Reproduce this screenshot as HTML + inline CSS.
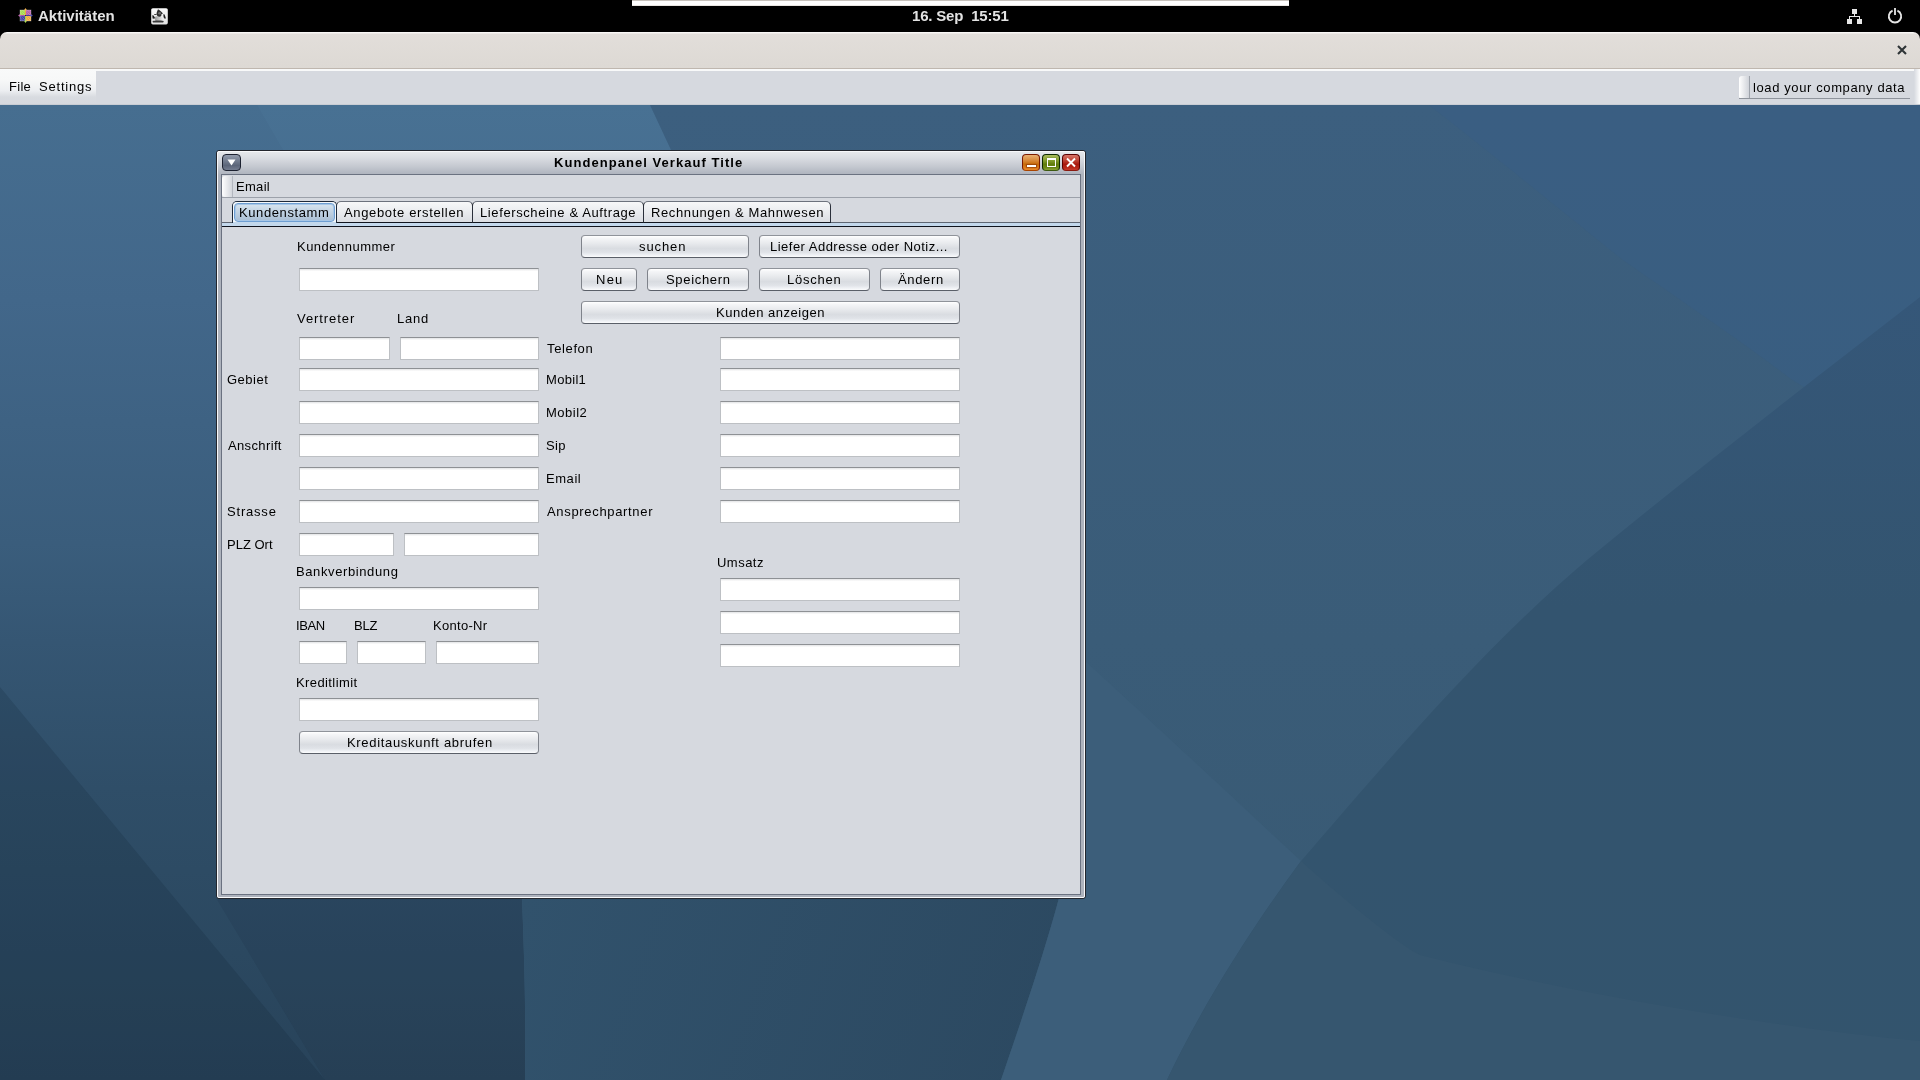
<!DOCTYPE html>
<html><head><meta charset="utf-8">
<style>
*{margin:0;padding:0;box-sizing:border-box}
html,body{width:1920px;height:1080px;overflow:hidden;background:#3b5d7c;font-family:"Liberation Sans",sans-serif}
.a{position:absolute}
.t{position:absolute;font-size:13px;color:#000;white-space:pre;line-height:15px;will-change:transform}
.tf{position:absolute;background:#fff;border:1px solid #bdc0c4;border-top-color:#8e9195}
.tf:after{content:"";position:absolute;left:0;right:0;top:0;height:2px;background:linear-gradient(#e2e3e5,#fdfdfd)}
.btn{position:absolute;border:1px solid #7f838b;border-bottom-color:#5a5f68;border-top-color:#8f939a;border-radius:4px;
 background:linear-gradient(#ffffff 0%,#f4f5f7 12%,#e8eaed 35%,#d9dce1 60%,#e0e3e8 78%,#eef0f4 90%,#fbfcfd 100%)}
.tb{position:absolute;top:154px;width:18px;height:17px;border-radius:4px}
</style></head><body>
<!-- desktop background -->
<svg class="a" style="left:0;top:0" width="1920" height="1080" viewBox="0 0 1920 1080">
<defs>
<linearGradient id="gL" gradientUnits="userSpaceOnUse" x1="0" y1="105" x2="0" y2="1080">
<stop offset="0" stop-color="#466e90"/><stop offset="0.2" stop-color="#42678a"/><stop offset="0.45" stop-color="#3a5d7c"/><stop offset="0.55" stop-color="#355673"/><stop offset="0.7" stop-color="#2f4e68"/><stop offset="0.87" stop-color="#2b4860"/><stop offset="1" stop-color="#28435a"/>
</linearGradient>
<linearGradient id="gLd" gradientUnits="userSpaceOnUse" x1="0" y1="684" x2="0" y2="1080">
<stop offset="0" stop-color="#2e4a62"/><stop offset="1" stop-color="#283f55"/>
</linearGradient>
<linearGradient id="gA" gradientUnits="userSpaceOnUse" x1="0" y1="105" x2="0" y2="1080">
<stop offset="0" stop-color="#3c5f7f"/><stop offset="0.55" stop-color="#3a5c78"/><stop offset="1" stop-color="#385972"/>
</linearGradient>
<radialGradient id="gTR" gradientUnits="userSpaceOnUse" cx="1920" cy="105" r="520">
<stop offset="0" stop-color="#3a6088" stop-opacity="0.55"/><stop offset="1" stop-color="#3a6088" stop-opacity="0"/>
</radialGradient>
<linearGradient id="gD" gradientUnits="userSpaceOnUse" x1="0" y1="297" x2="0" y2="1080">
<stop offset="0" stop-color="#355779"/><stop offset="0.4" stop-color="#33546f"/><stop offset="1" stop-color="#33546d"/>
</linearGradient>
<linearGradient id="gB2" gradientUnits="userSpaceOnUse" x1="525" y1="898" x2="1030" y2="1080">
<stop offset="0" stop-color="#31526c"/><stop offset="1" stop-color="#2c4961"/>
</linearGradient>
</defs>
<rect width="1920" height="1080" fill="url(#gA)"/>
<path d="M1429,105 C1500,160 1560,210 1623,260 C1680,300 1740,340 1791,379 C1840,410 1880,440 1920,470 L1920,105Z" fill="#385e86" fill-opacity="0.5"/>
<!-- top-left light petal -->
<path d="M0,105 L650,105 L671,150 L676,160 L0,160Z" fill="url(#gL)"/>
<path d="M257,105 L650,105 L671,150 L676,160 L289,160 Z" fill="#9fd0ff" fill-opacity="0.03"/>
<rect x="0" y="105" width="216" height="975" fill="url(#gL)"/>
<path d="M0,898 L522,898 C524,950 526,1010 525,1080 L0,1080Z" fill="url(#gL)"/>
<path d="M216,898 L522,898 C524,950 526,1010 525,1080 L325,1080Z" fill="#0a1520" fill-opacity="0.07"/>

<!-- bottom strip -->
<path d="M0,687 L325,1080 L0,1080Z" fill="#0a1520" fill-opacity="0.14"/>
<path d="M522,898 L1059,898 C1045,950 1025,1010 1001,1080 L525,1080 C526,1010 524,950 522,898Z" fill="url(#gB2)"/>
<!-- region B (below line a, left of curve 1) -->
<path d="M1085,661 C1150,720 1230,795 1301,861 C1350,905 1400,945 1420,955 C1600,1000 1800,1030 1920,1041 L1920,1080 L1001,1080 C1025,1010 1045,950 1059,898 L1085,898Z" fill="#3c5e7a"/>
<!-- dark petal right of curve 1 -->
<path d="M1920,297 C1800,390 1690,475 1587,560 C1480,650 1380,770 1301,861 C1250,930 1200,1010 1167,1080 L1920,1080Z" fill="url(#gD)"/>
<!-- bottom (below line a, right of curve 1) -->
<path d="M1301,861 C1350,905 1400,945 1420,955 C1600,1000 1800,1030 1920,1041 L1920,1080 L1167,1080 C1200,1010 1250,930 1301,861Z" fill="#36566f"/>
</svg>

<!-- top bar -->
<div class="a" style="left:0;top:0;width:1920px;height:44px;background:#000"></div>
<div class="a" style="left:632px;top:0;width:657px;height:6px;background:linear-gradient(#c7c2bc 0,#c7c2bc 1px,#fff 1px,#fff 5px,#e9e6e2 5px)"></div>
<svg class="a" style="left:14px;top:4px" width="24" height="24" viewBox="0 0 24 24">
<defs><pattern id="hp" width="2.5" height="2.5" patternUnits="userSpaceOnUse"><rect width="2.5" height="2.5" fill="none"/><path d="M0,0 L2.5,2.5" stroke="#fff" stroke-opacity="0.35" stroke-width="0.7"/></pattern></defs>
<rect x="6" y="6" width="5" height="5" fill="#a6d94a"/>
<rect x="12" y="6" width="5" height="5" fill="#b45aa8"/>
<rect x="6" y="12" width="5" height="5" fill="#3f3f9e"/>
<rect x="12" y="12" width="5" height="5" fill="#f0a93a"/>
<rect x="6" y="6" width="11" height="11" fill="url(#hp)"/>
<path d="M11.5,4 L13,6.2 L12,6.2 L12,11 L11,11 L11,6.2 L10,6.2Z" fill="#f0a93a"/>
<path d="M11.5,19 L13,16.8 L12,16.8 L12,12 L11,12 L11,16.8 L10,16.8Z" fill="#a6d94a"/>
<path d="M4,11.5 L6.2,10 L6.2,11 L11,11 L11,12 L6.2,12 L6.2,13Z" fill="#b45aa8"/>
<path d="M19,11.5 L16.8,10 L16.8,11 L12,11 L12,12 L16.8,12 L16.8,13Z" fill="#3f3f9e"/>
<rect x="6" y="6" width="11" height="11" fill="none" stroke="#fff" stroke-opacity="0.45" stroke-width="0.6"/>
</svg>
<svg class="a" style="left:151px;top:8px" width="17" height="17" viewBox="0 0 17 17">
<defs><linearGradient id="jg" x1="0" y1="0" x2="0" y2="1"><stop offset="0" stop-color="#fafafa"/><stop offset="1" stop-color="#e2e2e2"/></linearGradient>
<linearGradient id="jb" x1="0" y1="0" x2="1" y2="0"><stop offset="0" stop-color="#9a9a9a"/><stop offset="1" stop-color="#f0f0f0"/></linearGradient></defs>
<rect x="0.2" y="0.2" width="16.6" height="16.2" rx="1.6" fill="url(#jg)"/>
<path d="M4,9 C5,8 6,8 7,8.5 L10.5,8.5 C11.5,10 12,12 12,13.5 L4.5,13.5 C4,12 3.8,10.5 4,9Z" fill="url(#jb)"/>
<path d="M7,1.2 C8.5,2 10.5,3.8 12,5.6 L10.4,6.2 C10.6,7.5 10,8.6 8.6,8.8 L7.2,8.6 C6,7.8 5.4,6.5 5.6,5 C6,3.5 6.5,2.2 7,1.2Z" fill="#2e2e2e"/>
<ellipse cx="8.6" cy="5.3" rx="1.4" ry="1.2" fill="#6a6a6a"/>
<path d="M1.2,7.2 L2.6,7.6 L4,9.8 L3.4,10.8 L1.6,10.4Z" fill="#1e1e1e"/>
<rect x="3.2" y="6.1" width="2.4" height="0.9" fill="#333"/>
<path d="M12.3,6.3 L13.6,6.6 L14.8,10 L14,10.9 L12.6,9.2Z" fill="#1e1e1e"/>
<path d="M1.5,13 C4,12.4 9,12.3 12.8,13 L12.2,14.6 L2,14.6Z" fill="#3a3a3a"/>
</svg>
<svg class="a" style="left:1845px;top:7px" width="20" height="20" viewBox="0 0 20 20">
<g fill="#e6e6e6">
<rect x="7" y="2" width="5" height="5"/><rect x="2" y="12" width="5" height="5"/><rect x="12" y="12" width="5" height="5"/>
<rect x="9" y="7" width="1" height="2.5"/><rect x="4" y="9" width="11" height="1"/><rect x="4" y="9" width="1" height="3"/><rect x="14" y="9" width="1" height="3"/>
</g>
</svg>
<svg class="a" style="left:1885px;top:6px" width="20" height="20" viewBox="0 0 20 20">
<path d="M7.6,4.6 A6.2,6.2 0 1 0 12.4,4.6" fill="none" stroke="#e6e6e6" stroke-width="1.8"/>
<rect x="9.1" y="2" width="1.8" height="7" fill="#e6e6e6"/>
</svg>

<!-- gnome header -->
<div class="a" style="left:0;top:32px;width:1920px;height:37px;background:linear-gradient(#fbfaf9 0,#f6f4f2 1px,#e2deda 2px,#ddd9d4);border-radius:7px 7px 0 0;border-bottom:1px solid #bfb7af"></div>
<svg class="a" style="left:1896px;top:44px" width="12" height="12" viewBox="0 0 12 12">
<path d="M2,2 L10,10 M10,2 L2,10" stroke="#2e3436" stroke-width="2.1" stroke-linecap="butt"/>
</svg>

<!-- java menubar -->
<div class="a" style="left:0;top:69px;width:1920px;height:36px;background:linear-gradient(#f8f9f9 0,#f8f9f9 2px,#d6d9df 2px,#d6d9df 35px,#c9cdd4 35px)"></div>
<div class="a" style="left:1914px;top:69px;width:6px;height:35px;background:linear-gradient(90deg,#d6d9df,#fdfdfd)"></div>
<div class="a" style="left:0;top:69px;width:96px;height:35px;background:linear-gradient(#f9fafa 0%,#f7f8f8 30%,#eceef1 62%,#d8dbe0 80%,#d6d9df 100%)"></div>
<div class="a" style="left:1739px;top:76px;width:11px;height:23px;border-radius:3px 0 0 3px;background:linear-gradient(90deg,#ffffff,#d0d3d9);border-right:1px solid #9da2aa"></div>
<div class="a" style="left:1739px;top:98px;width:171px;height:1px;background:#8f949c"></div>

<!-- internal frame -->
<div class="a" style="left:216px;top:150px;width:870px;height:749px;border:1px solid #23262d;border-radius:3px;background:linear-gradient(#e8eaed 0px,#dcdfe4 6px,#c3c7cf 16px,#b2b7c1 22px,#aeb3bd 24px,#aeb3bd)"></div>
<div class="a" style="left:217px;top:151px;width:868px;height:747px;border:1px solid #f7f8fa;border-radius:2px"></div>
<div class="a" style="left:221px;top:174px;width:860px;height:721px;border:1px solid #6b7281;background:#d6d9df"></div>

<!-- frame menu button -->
<div class="a" style="left:222px;top:154px;width:19px;height:17px;border:1px solid #1c2130;border-radius:4px;background:linear-gradient(#939cad,#6a7487 50%,#5b6579 70%,#737c8f)"></div>
<svg class="a" style="left:226px;top:158px" width="11" height="9" viewBox="0 0 11 9"><path d="M1.5,1.5 L9.5,1.5 L5.5,7.5Z" fill="#fff"/></svg>

<!-- title buttons -->
<div class="tb" style="left:1022px;border:1px solid #7a1a00;border-bottom-color:#a84400;background:linear-gradient(#eab072 0%,#d98b3c 35%,#c86a08 62%,#dd7d1c 85%,#e98a2a 100%)"></div>
<div class="a" style="left:1027px;top:165px;width:9px;height:2px;background:#fff;box-shadow:0 0 1px 1px rgba(120,40,0,.55)"></div>
<div class="tb" style="left:1042px;border:1px solid #0f2a00;border-bottom-color:#3d5a10;background:linear-gradient(#a9bc5c 0%,#86a030 35%,#5f7c0c 62%,#6f8c18 85%,#8aa238 100%)"></div>
<div class="a" style="left:1047px;top:158px;width:9px;height:9px;border:1px solid #fff;border-top-width:2px;box-shadow:0 0 1px rgba(0,40,0,.5)"></div>
<div class="tb" style="left:1062px;border:1px solid #5a0000;border-bottom-color:#8a1a10;background:linear-gradient(#d77468 0%,#c04436 35%,#a8180e 62%,#b8281a 85%,#c83a2c 100%)"></div>
<svg class="a" style="left:1062px;top:154px" width="18" height="17" viewBox="0 0 18 17"><path d="M5,4.5 L13,12.5 M13,4.5 L5,12.5" stroke="#fff" stroke-width="1.9"/></svg>


<!-- frame menubar (Email) -->
<div class="a" style="left:222px;top:175px;width:858px;height:23px;background:#d6d9df;border-bottom:1px solid #9ca1aa"></div>
<div class="a" style="left:222px;top:176px;width:11px;height:21px;border-radius:3px 0 0 3px;background:linear-gradient(90deg,#ffffff,#d3d6dc);border-right:1px solid #b3b7bf"></div>

<!-- tabs -->
<div class="a" style="left:222px;top:222px;width:858px;height:5px;background:linear-gradient(#5f6672 0,#5f6672 1px,#c3d8ec 1px,#c3d8ec 4px,#10141d 4px)"></div>
<div class="a" style="left:336px;top:201px;width:137px;height:22px;border:1px solid #2a2f3a;border-top-color:#6c727d;border-radius:5px 5px 0 0;background:linear-gradient(#f7f8f9 0%,#eceef1 40%,#dadde2 100%);border-bottom-color:#10141d"></div>
<div class="a" style="left:472px;top:201px;width:172px;height:22px;border:1px solid #2a2f3a;border-top-color:#6c727d;border-radius:5px 5px 0 0;background:linear-gradient(#f7f8f9 0%,#eceef1 40%,#dadde2 100%);border-bottom-color:#10141d"></div>
<div class="a" style="left:643px;top:201px;width:188px;height:22px;border:1px solid #2a2f3a;border-top-color:#6c727d;border-radius:5px 5px 0 0;background:linear-gradient(#f7f8f9 0%,#eceef1 40%,#dadde2 100%);border-bottom-color:#10141d"></div>
<!-- selected tab -->
<div class="a" style="left:232px;top:201px;width:105px;height:22px;border:1px solid #1e2a3a;border-bottom:none;border-radius:5px 5px 0 0;background:#c3d8ec"></div>
<div class="a" style="left:233px;top:202px;width:103px;height:21px;border-radius:4px 4px 0 0;background:#f4f8fb"></div>
<div class="a" style="left:234px;top:203px;width:101px;height:19px;border:1px solid #6e9fd3;border-radius:4px;box-shadow:inset 0 0 0 1px #a8c7e6;background:linear-gradient(#d8e5f0 0%,#c4d5e5 40%,#a9bed3 100%)"></div>
<div class="a" style="left:233px;top:222px;width:103px;height:1px;background:#c3d8ec"></div>

<div class="tf" style="left:299px;top:268px;width:240px;height:23px"></div>
<div class="tf" style="left:299px;top:337px;width:91px;height:23px"></div>
<div class="tf" style="left:400px;top:337px;width:139px;height:23px"></div>
<div class="tf" style="left:299px;top:368px;width:240px;height:23px"></div>
<div class="tf" style="left:299px;top:401px;width:240px;height:23px"></div>
<div class="tf" style="left:299px;top:434px;width:240px;height:23px"></div>
<div class="tf" style="left:299px;top:467px;width:240px;height:23px"></div>
<div class="tf" style="left:299px;top:500px;width:240px;height:23px"></div>
<div class="tf" style="left:299px;top:533px;width:95px;height:23px"></div>
<div class="tf" style="left:404px;top:533px;width:135px;height:23px"></div>
<div class="tf" style="left:299px;top:587px;width:240px;height:23px"></div>
<div class="tf" style="left:299px;top:641px;width:48px;height:23px"></div>
<div class="tf" style="left:357px;top:641px;width:69px;height:23px"></div>
<div class="tf" style="left:436px;top:641px;width:103px;height:23px"></div>
<div class="tf" style="left:299px;top:698px;width:240px;height:23px"></div>
<div class="tf" style="left:720px;top:337px;width:240px;height:23px"></div>
<div class="tf" style="left:720px;top:368px;width:240px;height:23px"></div>
<div class="tf" style="left:720px;top:401px;width:240px;height:23px"></div>
<div class="tf" style="left:720px;top:434px;width:240px;height:23px"></div>
<div class="tf" style="left:720px;top:467px;width:240px;height:23px"></div>
<div class="tf" style="left:720px;top:500px;width:240px;height:23px"></div>
<div class="tf" style="left:720px;top:578px;width:240px;height:23px"></div>
<div class="tf" style="left:720px;top:611px;width:240px;height:23px"></div>
<div class="tf" style="left:720px;top:644px;width:240px;height:23px"></div>
<div class="btn" style="left:581px;top:235px;width:168px;height:23px"></div>
<div class="btn" style="left:759px;top:235px;width:201px;height:23px"></div>
<div class="btn" style="left:581px;top:268px;width:56px;height:23px"></div>
<div class="btn" style="left:647px;top:268px;width:102px;height:23px"></div>
<div class="btn" style="left:759px;top:268px;width:111px;height:23px"></div>
<div class="btn" style="left:880px;top:268px;width:80px;height:23px"></div>
<div class="btn" style="left:581px;top:301px;width:379px;height:23px"></div>
<div class="btn" style="left:299px;top:731px;width:240px;height:23px"></div>
<div class="t" id="t0" style="left:297.00px;top:239.00px;letter-spacing:0.482px;">Kundennummer</div>
<div class="t" id="t1" style="left:297.00px;top:311.00px;letter-spacing:0.925px;">Vertreter</div>
<div class="t" id="t2" style="left:397.00px;top:311.00px;letter-spacing:0.800px;">Land</div>
<div class="t" id="t3" style="left:547.00px;top:341.00px;letter-spacing:0.633px;">Telefon</div>
<div class="t" id="t4" style="left:227.00px;top:372.00px;letter-spacing:0.500px;">Gebiet</div>
<div class="t" id="t5" style="left:546.00px;top:372.00px;letter-spacing:0.300px;">Mobil1</div>
<div class="t" id="t6" style="left:546.00px;top:405.00px;letter-spacing:0.500px;">Mobil2</div>
<div class="t" id="t7" style="left:228.00px;top:438.00px;letter-spacing:0.362px;">Anschrift</div>
<div class="t" id="t8" style="left:546.00px;top:438.00px;letter-spacing:0.300px;">Sip</div>
<div class="t" id="t9" style="left:546.00px;top:471.00px;letter-spacing:0.550px;">Email</div>
<div class="t" id="t10" style="left:227.00px;top:504.00px;letter-spacing:0.800px;">Strasse</div>
<div class="t" id="t11" style="left:547.00px;top:504.00px;letter-spacing:0.671px;">Ansprechpartner</div>
<div class="t" id="t12" style="left:227.00px;top:537.00px;letter-spacing:0.000px;">PLZ Ort</div>
<div class="t" id="t13" style="left:296.00px;top:564.00px;letter-spacing:0.608px;">Bankverbindung</div>
<div class="t" id="t14" style="left:717.00px;top:555.00px;letter-spacing:0.480px;">Umsatz</div>
<div class="t" id="t15" style="left:296.00px;top:618.00px;letter-spacing:-0.367px;">IBAN</div>
<div class="t" id="t16" style="left:354.00px;top:618.00px;letter-spacing:-0.200px;">BLZ</div>
<div class="t" id="t17" style="left:433.00px;top:618.00px;letter-spacing:0.300px;">Konto-Nr</div>
<div class="t" id="t18" style="left:296.00px;top:675.00px;letter-spacing:0.400px;">Kreditlimit</div>
<div class="t" id="t19" style="left:9.00px;top:79.00px;letter-spacing:0.300px;">File</div>
<div class="t" id="t20" style="left:39.00px;top:79.00px;letter-spacing:0.800px;">Settings</div>
<div class="t" id="t21" style="left:1753.00px;top:80.00px;letter-spacing:0.610px;">load your company data</div>
<div class="t" id="t22" style="left:236.00px;top:179.00px;letter-spacing:0.300px;">Email</div>
<div class="t" id="t23" style="left:239.00px;top:205.00px;letter-spacing:0.600px;">Kundenstamm</div>
<div class="t" id="t24" style="left:344.00px;top:205.00px;letter-spacing:0.653px;">Angebote erstellen</div>
<div class="t" id="t25" style="left:480.00px;top:205.00px;letter-spacing:0.604px;">Lieferscheine & Auftrage</div>
<div class="t" id="t26" style="left:651.00px;top:205.00px;letter-spacing:0.610px;">Rechnungen & Mahnwesen</div>
<div class="t" id="t27" style="left:639.00px;top:239.00px;letter-spacing:0.900px;">suchen</div>
<div class="t" id="t28" style="left:770.00px;top:239.00px;letter-spacing:0.479px;">Liefer Addresse oder Notiz...</div>
<div class="t" id="t29" style="left:596.00px;top:272.00px;letter-spacing:1.250px;">Neu</div>
<div class="t" id="t30" style="left:666.00px;top:272.00px;letter-spacing:0.675px;">Speichern</div>
<div class="t" id="t31" style="left:787.00px;top:272.00px;letter-spacing:0.783px;">Löschen</div>
<div class="t" id="t32" style="left:898.00px;top:272.00px;letter-spacing:0.660px;">Ändern</div>
<div class="t" id="t33" style="left:716.00px;top:305.00px;letter-spacing:0.514px;">Kunden anzeigen</div>
<div class="t" id="t34" style="left:347.00px;top:735.00px;letter-spacing:0.681px;">Kreditauskunft abrufen</div>
<div class="t" id="t35" style="left:554.00px;top:155.00px;letter-spacing:1.050px;font-weight:bold;">Kundenpanel Verkauf Title</div>
<div class="t" id="t36" style="left:38.00px;top:7.30px;letter-spacing:-0.000px;font-weight:bold;font-size:15px;line-height:17px;color:#e2e2e2;">Aktivitäten</div>
<div class="t" id="t37" style="left:912.00px;top:7.30px;letter-spacing:-0.185px;font-weight:bold;font-size:15px;line-height:17px;color:#e2e2e2;">16. Sep  15:51</div>
</body></html>
